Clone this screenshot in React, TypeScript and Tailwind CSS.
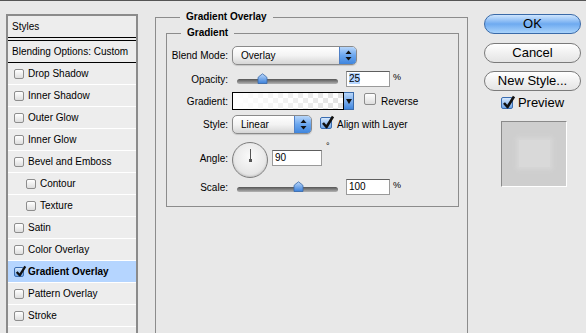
import React from 'react';

const Check: React.FC<{ checked?: boolean; size?: number }> = ({ checked, size = 10 }) => {
  const box = size === 12 ? 'h-[12px] w-[12px]' : 'h-[10px] w-[10px]';
  return (
    <span className={`relative inline-block shrink-0 rounded-[2px] border ${box} ${checked ? 'border-[#3a6cb0] bg-gradient-to-b from-[#d6e8fc] to-[#6ea5e8]' : 'border-[#8d8d8d] bg-gradient-to-b from-white to-[#dedede]'}`}>
      {checked && (
        <svg className="absolute -top-[3px] left-[0px]" width={size + 2} height={size + 3} viewBox="0 0 14 15">
          <path d="M2 8 L5.5 12 L12 1.5" fill="none" stroke="#111" strokeWidth="2.6" strokeLinejoin="round" />
        </svg>
      )}
    </span>
  );
};

const Stepper: React.FC = () => (
  <span className="ml-auto flex h-full w-[17px] items-center justify-center rounded-r-[4px] border-l border-[#4f80c6] bg-gradient-to-b from-[#b7d6fa] via-[#6aa6ee] to-[#3f86de]">
    <svg width="7" height="11" viewBox="0 0 7 11">
      <path d="M3.5 0.5 L6.5 4 L0.5 4 Z" fill="#111" />
      <path d="M3.5 10.5 L6.5 7 L0.5 7 Z" fill="#111" />
    </svg>
  </span>
);

const Select: React.FC<{ value: string; width: string }> = ({ value, width }) => (
  <div className={`flex h-[19px] items-center rounded-[5px] border border-[#8a8a8a] bg-gradient-to-b from-white via-[#f3f3f3] to-[#d6d6d6] shadow-[0_1px_1px_rgba(0,0,0,0.15)] ${width}`}>
    <span className="pl-[8px]">{value}</span>
    <Stepper />
  </div>
);

const Slider: React.FC<{ thumb: number }> = ({ thumb }) => (
  <div className="relative ml-[5px] h-[12px] w-[101px]">
    <div className="absolute left-0 right-0 top-[6px] h-[5px] rounded-full bg-gradient-to-b from-[#555] to-[#b4b4b4]" />
    <svg className="absolute top-[0px]" style={{ left: thumb }} width="11" height="11" viewBox="0 0 11 11">
      <defs>
        <linearGradient id="th" x1="0" y1="0" x2="0" y2="1">
          <stop offset="0" stopColor="#bcd8fb" />
          <stop offset="1" stopColor="#3a80da" />
        </linearGradient>
      </defs>
      <path d="M1 10.5 L1 5 Q1 4 2 3.5 L5.5 0.8 L9 3.5 Q10 4 10 5 L10 10.5 Z" fill="url(#th)" stroke="#3a6bab" strokeWidth="0.8" />
    </svg>
  </div>
);

const NumField: React.FC<{ value: string; width: string; selected?: boolean }> = ({ value, width, selected }) => (
  <div className={`h-[16px] border border-[#9a9a9a] border-t-[#5e5e5e] bg-white pl-[2px] leading-[14px] ${width}`}>
    <span className={selected ? 'bg-[#b5d5ff]' : ''}>{value}</span>
  </div>
);

const styleRows: { label: string; sub?: boolean; checked?: boolean }[] = [
  { label: 'Drop Shadow' },
  { label: 'Inner Shadow' },
  { label: 'Outer Glow' },
  { label: 'Inner Glow' },
  { label: 'Bevel and Emboss' },
  { label: 'Contour', sub: true },
  { label: 'Texture', sub: true },
  { label: 'Satin' },
  { label: 'Color Overlay' },
  { label: 'Gradient Overlay', checked: true },
  { label: 'Pattern Overlay' },
  { label: 'Stroke' },
  { label: '' },
];

export default function App() {
  return (
    <div className="flex h-[333px] w-[586px] overflow-hidden border-t border-[#555] bg-[#e8e8e8] font-['Liberation_Sans',Arial,sans-serif] text-[10px] text-black">
      {/* styles list */}
      <div className="ml-[6px] mt-[13px] h-[400px] w-[132px] shrink-0 border-2 border-b-0 border-[#8b8b8b] bg-[#ededed]">
        <div className="flex h-[22px] items-center border-b border-black pl-[4px]">Styles</div>
        <div className="h-[2px]" />
        <div className="flex h-[23px] items-center border-y border-black pl-[4px]">Blending Options: Custom</div>
        {styleRows.map((r, i) => (
          <div
            key={i}
            className={`flex h-[22px] items-center gap-[4px] border-b border-white ${r.sub ? 'pl-[18px]' : 'pl-[6px]'} ${r.checked ? 'bg-[#b5d5ff] font-bold' : ''}`}
          >
            {r.label && <Check checked={r.checked} />}
            <span>{r.label}</span>
          </div>
        ))}
      </div>

      {/* options */}
      <fieldset className="ml-[17px] mt-[9px] h-[340px] w-[313px] shrink-0 border border-[#8c8c8c] pl-[10px]">
        <legend className="ml-[14px] px-[6px] text-[10px] font-bold leading-[14px]">Gradient Overlay</legend>
        <fieldset className="mt-[2px] h-[181px] w-[293px] border border-[#8c8c8c]">
          <legend className="ml-[14px] px-[6px] font-bold leading-[14px]">Gradient</legend>
          <div className="flex flex-col pt-[6px]">
            <div className="flex h-[19px] items-center">
              <span className="w-[61px] text-right">Blend Mode:</span>
              <div className="ml-[4px]"><Select value="Overlay" width="w-[125px]" /></div>
            </div>
            <div className="mt-[6px] flex h-[16px] items-center">
              <span className="w-[61px] text-right">Opacity:</span>
              <div className="ml-[4px]"><Slider thumb={20} /></div>
              <div className="ml-[8px]"><NumField value="25" width="w-[44px]" selected /></div>
              <span className="ml-[3px] self-start text-[9px]">%</span>
            </div>
            <div className="mt-[5px] flex h-[18px] items-center">
              <span className="w-[61px] text-right">Gradient:</span>
              <div className="ml-[4px] flex h-[18px]">
                <div className="relative h-full w-[112px] border border-black bg-[conic-gradient(#e2e2e2_25%,#fff_0_50%,#e2e2e2_0_75%,#fff_0)] bg-[length:10px_10px]">
                  <div className="h-full w-full bg-gradient-to-r from-white to-transparent" />
                </div>
                <div className="flex w-[10px] items-center justify-center border border-l-0 border-[#3a6bab] bg-gradient-to-b from-[#b7d6fa] to-[#3f86de]">
                  <svg width="6" height="5" viewBox="0 0 6 5"><path d="M0 0 L6 0 L3 5 Z" fill="#111" /></svg>
                </div>
              </div>
              <div className="ml-[10px]"><Check size={12} /></div>
              <span className="ml-[5px]">Reverse</span>
            </div>
            <div className="mt-[5px] flex h-[19px] items-center">
              <span className="w-[61px] text-right">Style:</span>
              <div className="ml-[4px]"><Select value="Linear" width="w-[80px]" /></div>
              <div className="ml-[8px]"><Check size={12} checked /></div>
              <span className="ml-[5px]">Align with Layer</span>
            </div>
            <div className="mt-[6px] flex h-[36px] items-center">
              <span className="w-[61px] text-right">Angle:</span>
              <div className="relative ml-[4px] mt-[3px] h-[36px] w-[36px] rounded-full border border-[#7d7d7d] bg-[radial-gradient(circle_at_50%_40%,#fafafa,#dcdcdc)] shadow-[inset_0_-1px_2px_rgba(0,0,0,0.15)]">
                <div className="absolute left-[17px] top-[6px] h-[12px] w-[1px] bg-[#555]" />
                <div className="absolute left-[16px] top-[16px] h-[3px] w-[3px] bg-[#555]" />
              </div>
              <div className="ml-[4px]"><NumField value="90" width="w-[50px]" /></div>
              <span className="ml-[4px] self-start text-[9px]">°</span>
            </div>
            <div className="mt-[3px] flex h-[16px] items-center">
              <span className="w-[61px] text-right">Scale:</span>
              <div className="ml-[4px]"><Slider thumb={56} /></div>
              <div className="ml-[8px]"><NumField value="100" width="w-[44px]" /></div>
              <span className="ml-[3px] self-start text-[9px]">%</span>
            </div>
          </div>
        </fieldset>
      </fieldset>

      {/* buttons */}
      <div className="ml-[16px] mt-[13px] flex w-[97px] shrink-0 flex-col items-center text-[13px]">
        <button className="h-[20px] w-[97px] rounded-full border border-[#3a6aa8] bg-gradient-to-b from-[#cfe5fd] via-[#6eaaf0] to-[#a9d3fb] leading-[18px]">OK</button>
        <button className="mt-[9px] h-[20px] w-[97px] rounded-full border border-[#7a7a7a] bg-gradient-to-b from-white via-[#f1f1f1] to-[#e4e4e4] leading-[18px]">Cancel</button>
        <button className="mt-[8px] h-[20px] w-[97px] rounded-full border border-[#7a7a7a] bg-gradient-to-b from-white via-[#f1f1f1] to-[#e4e4e4] leading-[18px]">New Style...</button>
        <div className="mt-[2px] flex items-center gap-[5px]">
          <Check size={12} checked />
          <span>Preview</span>
        </div>
        <div className="ml-[3px] mt-[8px] flex h-[66px] w-[66px] items-center justify-center border border-[#8a8a8a] border-b-white border-r-white bg-[#cecece]">
          <div className="h-[27px] w-[31px] bg-[#d9d9d9] shadow-[0_0_4px_3px_#d6d6d6]" />
        </div>
      </div>
    </div>
  );
}
